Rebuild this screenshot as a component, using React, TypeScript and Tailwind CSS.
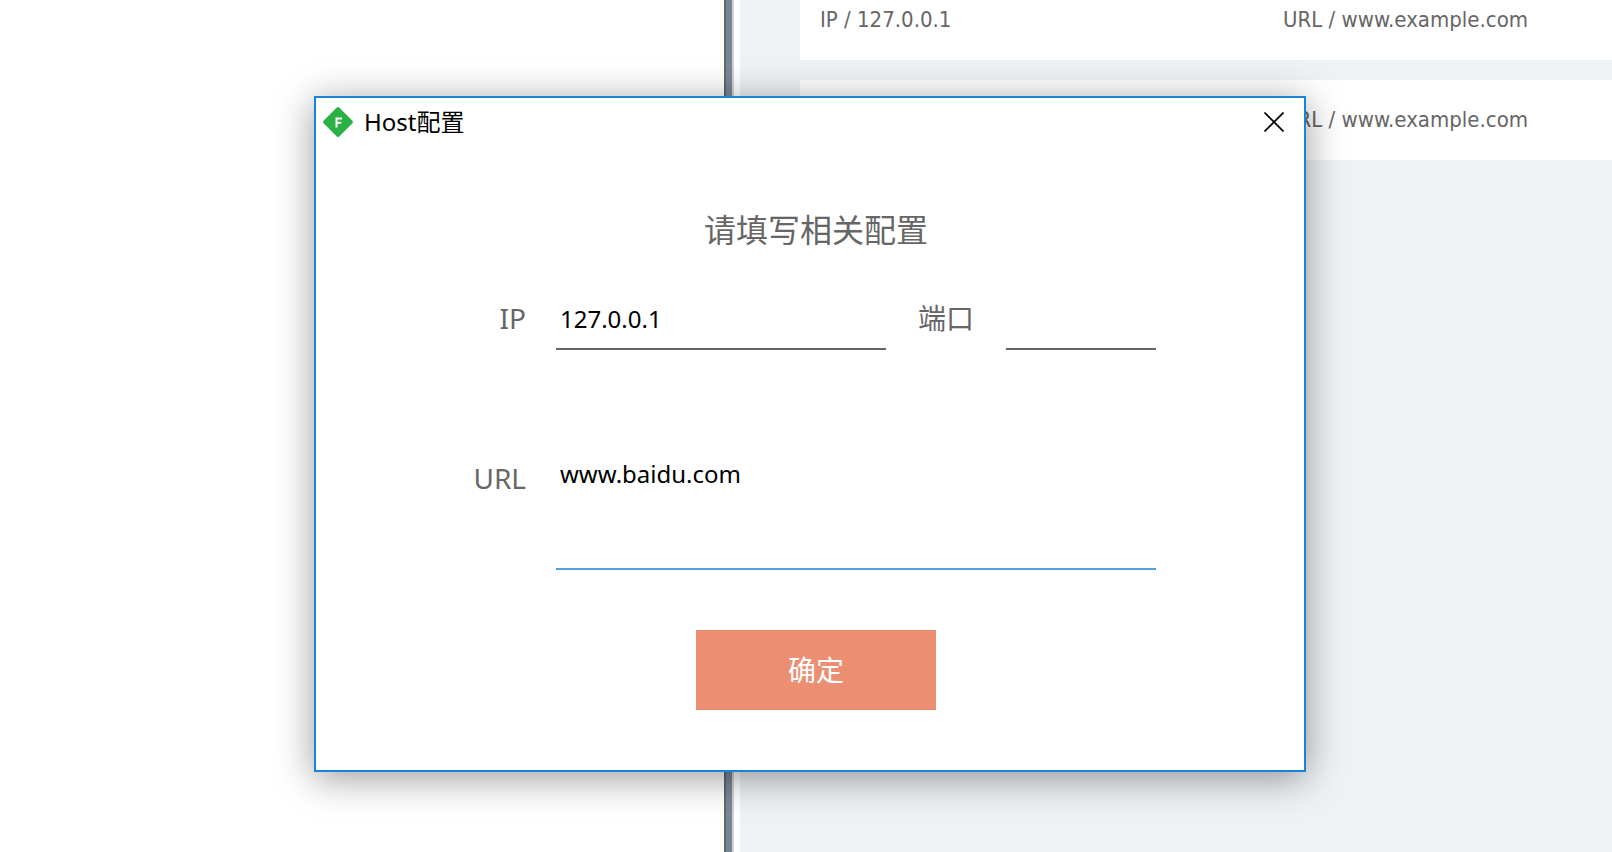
import { useState } from "react";

const hosts = [
  { id: 1, ip: "127.0.0.1", url: "www.example.com" },
  { id: 2, ip: "127.0.0.1", url: "www.example.com" },
];

function HostCard({ ip, url }: { ip: string; url: string }) {
  return (
    <li className="flex h-20 items-center bg-white px-5 font-['DejaVu_Sans_Condensed','Noto_Sans_CJK_SC',sans-serif] text-[22px] leading-7 whitespace-nowrap text-[#666]">
      <span className="w-[463px] shrink-0">IP / {ip}</span>
      <span>URL / {url}</span>
    </li>
  );
}

function AppIcon() {
  return (
    <svg viewBox="0 0 32 32" className="size-8" aria-hidden="true">
      <path d="M14.8 1.6a1.7 1.7 0 0 1 2.4 0l13.2 13.2a1.7 1.7 0 0 1 0 2.4L17.2 30.4a1.7 1.7 0 0 1-2.4 0L1.6 17.2a1.7 1.7 0 0 1 0-2.4z" fill="#2cb144" />
      <path d="M14.5 21.5v-9H20M14.5 16.8h4.7" fill="none" stroke="#fff" strokeWidth="2" />
    </svg>
  );
}

function HostDialog() {
  const [ip, setIp] = useState("127.0.0.1");
  const [port, setPort] = useState("");
  const [url, setUrl] = useState("www.baidu.com");

  return (
    <section
      role="dialog"
      aria-labelledby="dialog-title"
      className="absolute top-24 left-[314px] w-[992px] border-2 border-[#1b82d6] bg-white pb-[60px] shadow-[0_6px_36px_rgba(0,0,0,0.4)]"
    >
      <header className="flex h-12 items-center gap-2.5 pr-3.5 pl-1.5">
        <AppIcon />
        <h1 id="dialog-title" className="flex-1 text-2xl text-black">
          Host配置
        </h1>
        <button type="button" aria-label="关闭" className="flex size-8 items-center justify-center">
          <svg viewBox="0 0 20 20" className="size-5" aria-hidden="true">
            <path d="M.5.5l19 19M19.5.5l-19 19" stroke="#000" strokeWidth="1.7" />
          </svg>
        </button>
      </header>
      <form className="flex flex-col pl-3 text-[28px] text-[#666]" onSubmit={(e) => e.preventDefault()}>
        <h2 className="mt-[60px] text-center text-[32px] leading-12">请填写相关配置</h2>
        <div className="mt-10 flex items-start gap-[30px] pr-[148px] leading-12">
          <label htmlFor="ip" className="w-[198px] text-right">
            IP
          </label>
          <input
            id="ip"
            value={ip}
            onChange={(e) => setIp(e.target.value)}
            className="h-14 min-w-0 flex-1 border-b-2 border-[#666] px-1 pb-1.5 text-2xl text-black outline-none"
          />
          <label htmlFor="port" className="w-[60px] text-center">
            端口
          </label>
          <input
            id="port"
            value={port}
            onChange={(e) => setPort(e.target.value)}
            className="h-14 w-[150px] border-b-2 border-[#666] px-1 pb-1.5 text-2xl text-black outline-none"
          />
        </div>
        <div className="mt-[104px] flex items-start gap-[30px] pr-[148px]">
          <label htmlFor="url" className="w-[198px] text-right leading-12">
            URL
          </label>
          <textarea
            id="url"
            value={url}
            onChange={(e) => setUrl(e.target.value)}
            className="h-[116px] flex-1 resize-none border-b-2 border-[#559de4] px-1 py-1 text-2xl leading-8 text-black outline-none"
          />
        </div>
        <button type="submit" className="mt-[60px] h-20 w-60 self-center bg-[#ec8e72] text-white">
          确定
        </button>
      </form>
    </section>
  );
}

export default function App() {
  return (
    <div className="relative flex min-h-screen overflow-hidden bg-white font-['Noto_Sans','Noto_Sans_CJK_SC',sans-serif]">
      <aside className="w-[724px] shrink-0" />
      <div className="w-2.5 shrink-0 border-r-2 border-l-2 border-r-[#d3d3d3] border-l-[#666] bg-[#778899]" />
      <main className="ml-1.5 min-w-0 flex-1 bg-[#eef2f5] pl-[60px]">
        <ul className="-mt-5 flex flex-col gap-5">
          {hosts.map((host) => (
            <HostCard key={host.id} ip={host.ip} url={host.url} />
          ))}
        </ul>
      </main>
      <HostDialog />
    </div>
  );
}
